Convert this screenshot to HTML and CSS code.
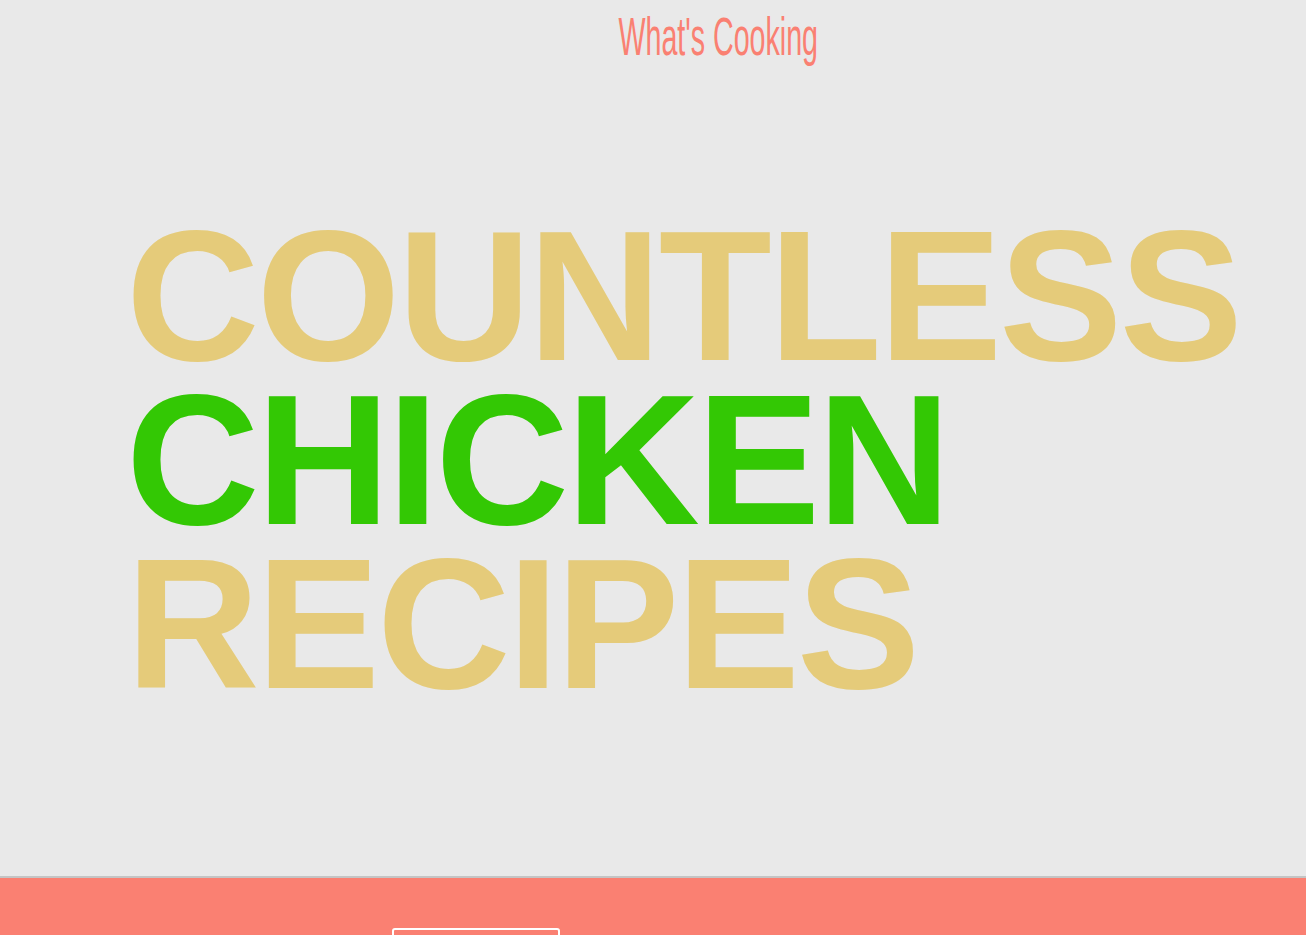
FILE: index.html
```html
<!DOCTYPE html>
<html lang="en">
<head>
<meta charset="utf-8">
<title>What's Cooking</title>
<link rel="stylesheet" href="styles.css">
</head>
<body>
<header class="site-header">
  <h2 class="brand">What's Cooking</h2>
</header>
<section class="hero">
  <h1 class="hero-title">
    <span class="line gold">COUNTLESS</span>
    <span class="line green">CHICKEN</span>
    <span class="line gold">RECIPES</span>
  </h1>
</section>
<footer class="search-band">
  <div class="search-box"></div>
</footer>
</body>
</html>
```
FILE: styles.css
```css
html, body {
  margin: 0;
  padding: 0;
  background: #e9e9e9;
}
body {
  font-family: "Liberation Sans", Arial, sans-serif;
}
.site-header {
  display: flex;
  justify-content: center;
  padding: 10px 0 0 130px;
  height: 53px;
}
.brand {
  margin: 0;
  font-weight: 400;
  font-size: 54px;
  line-height: 53px;
  color: #fa8072;
  transform: scaleX(0.53);
  white-space: nowrap;
}
.hero {
  height: 815px;
  box-sizing: border-box;
  padding: 151px 0 0 126px;
  border-bottom: 2px solid #c4c4c4;
}
.hero-title {
  margin: 0;
  font-weight: 700;
  font-size: 185px;
  line-height: 164px;
  letter-spacing: -3px;
}
.line {
  display: block;
  white-space: nowrap;
}
.gold { color: #e5cb7a; }
.green { color: #33c804; }
.search-band {
  background: #fa8072;
  height: 140px;
  padding: 50px 0 0 392px;
  box-sizing: border-box;
}
.search-box {
  width: 164px;
  height: 40px;
  border: 2px solid #ffffff;
  border-radius: 3px;
}
```
